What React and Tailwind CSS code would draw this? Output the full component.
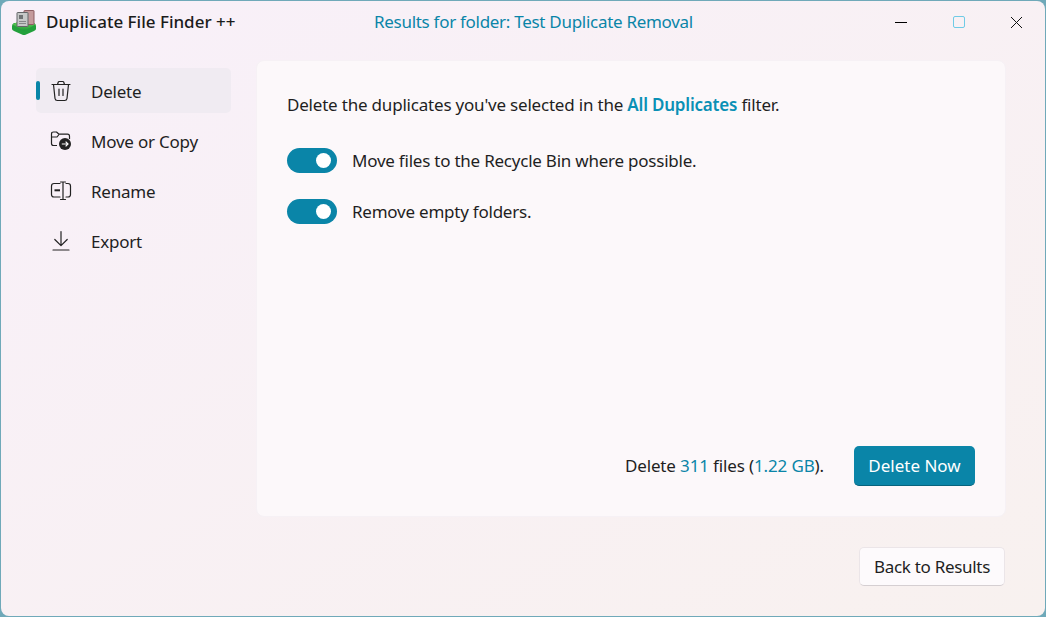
function AppLogo() {
  return (
    <svg width="26" height="26" viewBox="0 0 26 26">
      <defs>
        <linearGradient id="logoGreen" x1="0" y1="0" x2="0" y2="1">
          <stop offset="0" stopColor="#7fe05f" />
          <stop offset="1" stopColor="#1f9a3a" />
        </linearGradient>
      </defs>
      <path d="M1 17 Q1 15 3 14 L23 14 Q25 15 25 17 L25 20 Q25 21 23 22 L14 26 L12 26 L3 22 Q1 21 1 20 Z" fill="#23a03c" />
      <path d="M1.5 15.5 L12 10 L14 10 L24.5 15.5 L14 21.5 L12 21.5 Z" fill="url(#logoGreen)" />
      <rect x="13" y="1.5" width="10" height="14" rx="0.5" fill="#c49a9c" stroke="#8c5d62" />
      <rect x="6" y="3.5" width="11" height="14" rx="0.5" fill="#c6c8c8" stroke="#636668" />
      <rect x="8" y="6" width="4" height="4" fill="#6f7274" />
      <path d="M8 12.5 H15 M8 14.5 H15" stroke="#85888a" strokeWidth="1" />
    </svg>
  )
}

function TrashIcon() {
  return (
    <svg width="22" height="22" viewBox="0 0 22 22" fill="none" stroke="#222" strokeWidth="1.2" strokeLinecap="round" strokeLinejoin="round">
      <path d="M2 4.5 H20 M7.5 4.5 L8.3 2 Q8.5 1.5 9.2 1.5 H12.8 Q13.5 1.5 13.7 2 L14.5 4.5" />
      <path d="M3.5 4.5 L5 18.5 Q5.3 20.5 7.3 20.5 H14.7 Q16.7 20.5 17 18.5 L18.5 4.5" />
      <path d="M9 9 V15.5 M13 9 V15.5" />
    </svg>
  )
}

function MoveIcon() {
  return (
    <svg width="22" height="20" viewBox="0 0 22 20" fill="none">
      <path d="M7 14.5 H3.5 Q1.5 14.5 1.5 12.5 V3 Q1.5 1 3.5 1 H6.5 L9 3.2 H17.5 Q19.5 3.2 19.5 5.2 V8" stroke="#222" strokeWidth="1.2" strokeLinejoin="round" />
      <path d="M1.5 6 H7 L9 3.5" stroke="#222" strokeWidth="1.2" />
      <circle cx="15" cy="13" r="6" fill="#222" />
      <path d="M11.8 13 H18 M15.6 10.6 L18 13 L15.6 15.4" stroke="#fff" strokeWidth="1.2" />
    </svg>
  )
}

function RenameIcon() {
  return (
    <svg width="22" height="20" viewBox="0 0 22 20" fill="none" stroke="#222" strokeWidth="1.2" strokeLinecap="round">
      <path d="M10 2.5 H4 Q1.5 2.5 1.5 5 V13.5 Q1.5 16 4 16 H10" />
      <path d="M16 2.5 H18 Q20.5 2.5 20.5 5 V13.5 Q20.5 16 18 16 H16" />
      <path d="M4.5 9.3 H10" strokeWidth="2" strokeLinecap="butt" />
      <path d="M13 1 V18.5 M10.5 1 H15.5 M10.5 18.5 H15.5" />
    </svg>
  )
}

function ExportIcon() {
  return (
    <svg width="20" height="22" viewBox="0 0 20 22" fill="none" stroke="#222" strokeWidth="1.2" strokeLinecap="round" strokeLinejoin="round">
      <path d="M10 1.5 V15.5 M3.8 9.5 L10 15.7 L16.2 9.5" />
      <path d="M2 20 H18" />
    </svg>
  )
}

function NavItem({ icon, label, active }) {
  return (
    <div className={`relative flex items-center h-[45px] rounded-[5px] ${active ? 'bg-[#f0ebf2]' : ''}`}>
      {active && <div className="absolute left-0 top-[13px] h-[19px] w-[4px] rounded bg-[#0a85a8]" />}
      <div className="w-[55px] flex justify-center pr-[5px] text-[#222]">{icon}</div>
      <span className="pt-[2px] tracking-[-0.22px]">{label}</span>
    </div>
  )
}

function Toggle() {
  return (
    <div className="flex items-center justify-end w-[50px] h-[25px] rounded-full bg-[#0a85a8] pr-[6px]">
      <div className="w-[15px] h-[15px] rounded-full bg-white" />
    </div>
  )
}

export default function App() {
  return (
    <div className="w-[1046px] h-[617px] bg-[#6fa9b9] overflow-hidden font-['Noto_Sans','Open_Sans',sans-serif] text-[17px] text-[#1f1f1f]">
      <div className="w-[1044px] h-[615px] ml-[1px] mt-[1px] rounded-[8px] bg-gradient-to-br from-[#f8f0f9] to-[#f8f1ef] flex flex-col">
        <header className="flex items-center h-[42px] shrink-0">
          <div className="pl-[10px] pr-[9px]"><AppLogo /></div>
          <span className="w-[328px] font-medium text-[#1b1b1b]">Duplicate File Finder ++</span>
          <span className="text-[#0a85a8] tracking-[-0.29px]">Results for folder: Test Duplicate Removal</span>
          <div className="ml-auto flex items-center text-black">
            <div className="w-[58px] flex justify-center"><div className="w-[12px] h-[1px] bg-black" /></div>
            <div className="w-[58px] flex justify-center"><div className="w-[12px] h-[12px] rounded-[2px] border border-[#6fcbe6]" /></div>
            <div className="w-[57px] flex justify-center">
              <svg width="13" height="13" viewBox="0 0 13 13" stroke="#111" strokeWidth="1"><path d="M1 1 L12 12 M12 1 L1 12" /></svg>
            </div>
          </div>
        </header>
        <div className="flex flex-1">
          <nav className="w-[255px] pl-[35px] pr-[25px] pt-[25px] flex flex-col gap-[5px]">
            <NavItem active label="Delete" icon={<TrashIcon />} />
            <NavItem label="Move or Copy" icon={<MoveIcon />} />
            <NavItem label="Rename" icon={<RenameIcon />} />
            <NavItem label="Export" icon={<ExportIcon />} />
          </nav>
          <main className="w-[750px] flex flex-col pt-[17px]">
            <section className="h-[457px] rounded-[8px] bg-[#fcf8fa] border border-[#f6f1f5] px-[30px] pt-[31px] pb-[30px] flex flex-col">
              <p className="tracking-[-0.2px]">Delete the duplicates you've selected in the <b className="font-semibold text-[#0a90b5]">All Duplicates</b> filter.</p>
              <div className="flex items-center gap-[15px] mt-[30px]"><Toggle /><span className="tracking-[-0.23px]">Move files to the Recycle Bin where possible.</span></div>
              <div className="flex items-center gap-[15px] mt-[26px]"><Toggle /><span className="tracking-[-0.23px]">Remove empty folders.</span></div>
              <div className="mt-auto flex items-center justify-end gap-[30px]">
                <span className="tracking-[-0.14px]">Delete <span className="text-[#0a85a8]">311</span> files (<span className="text-[#0a85a8]">1.22 GB</span>).</span>
                <button className="w-[121px] h-[40px] rounded-[5px] bg-[#0a85a8] border-b border-[#07637d] text-white">Delete Now</button>
              </div>
            </section>
            <div className="flex justify-end mt-[30px] mr-[1px]">
              <button className="w-[146px] h-[39px] rounded-[5px] bg-[#fdfafc] border border-[#ebe5e8] border-b-[#d5cfd2] tracking-[-0.3px]">Back to Results</button>
            </div>
          </main>
        </div>
      </div>
    </div>
  )
}
